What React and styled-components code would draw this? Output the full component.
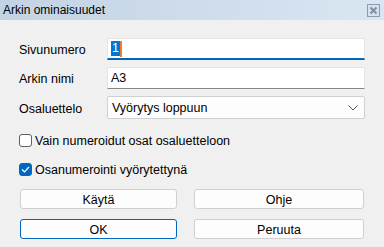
import React from 'react';
import styled, { createGlobalStyle } from 'styled-components';

const Global = createGlobalStyle`
    html, body { margin:0; padding:0; background:#f0f0f0; }
    body { font-family: "Liberation Sans", Arial, sans-serif; font-size:12.5px; color:#000; }
`

const Window = styled.div`
    width:384px;
    height:247px;
    background:#f0f0f0;
    display:flex;
    flex-direction:column;
    overflow:hidden;
`

const TitleBar = styled.div`
    height:20px;
    flex:none;
    display:flex;
    align-items:center;
    justify-content:space-between;
    padding:0 4px 0 3px;
    background:linear-gradient(to right, #c3d3e4, #d9e6f2);
    font-size:12px;
`

const CloseBox = styled.div`
    width:11px;
    height:11px;
    border:1px solid #8a9bb0;
    background:#d6e1ec;
    display:flex;
    align-items:center;
    justify-content:center;
    margin-top:1px;
`

const Body = styled.div`
    padding:18px 19px 0 19px;
    display:flex;
    flex-direction:column;
`

const Form = styled.div`
    display:grid;
    grid-template-columns:88px 1fr;
    row-gap:7px;
    align-items:center;
`

const Label = styled.label`
    padding-top:2px;
`

const Field = styled.div`
    height:22px;
    box-sizing:border-box;
    background:#fff;
    border:1px solid #e5e5e5;
    border-bottom:${p => p.$focus ? '2px solid #0067c0' : '1px solid #868686'};
    display:flex;
    align-items:center;
    padding:0 3px;
`

const Selected = styled.span`
    background:#0078d7;
    color:#fff;
    padding:0 1px;
    line-height:15px;
`

const Caret = styled.span`
    width:2px;
    height:16px;
    background:#f07d22;
`

const Select = styled.div`
    height:23px;
    box-sizing:border-box;
    background:#fdfdfd;
    border:1px solid #d0d0d0;
    border-radius:2px;
    display:flex;
    align-items:center;
    justify-content:space-between;
    padding:0 6px 0 4px;
`

const Checks = styled.div`
    display:flex;
    flex-direction:column;
    gap:16px;
    margin-top:15px;
`

const CheckRow = styled.div`
    display:flex;
    align-items:center;
    gap:3px;
    height:13px;
`

const Box = styled.span`
    width:13px;
    height:13px;
    box-sizing:border-box;
    border-radius:3px;
    border:1px solid ${p => p.$checked ? '#0067c0' : '#5f5f5f'};
    background:${p => p.$checked ? '#0067c0' : '#fff'};
    display:flex;
    align-items:center;
    justify-content:center;
`

const Buttons = styled.div`
    display:grid;
    grid-template-columns:157px 170px;
    column-gap:17px;
    row-gap:10px;
    margin-top:13px;
    padding-left:1px;
`

const Button = styled.button`
    height:20px;
    box-sizing:border-box;
    background:#fdfdfd;
    border:1px solid ${p => p.$primary ? '#0067c0' : '#d0d0d0'};
    border-radius:3px;
    font-family:inherit;
    font-size:12.5px;
    color:#000;
    padding:1px 0 0;
`

export default function App() {
    return (
        <Window>
            <Global />
            <TitleBar>
                <span>Arkin ominaisuudet</span>
                <CloseBox>
                    <svg width="9" height="9" viewBox="0 0 9 9">
                        <path d="M1.5 1.5 L7.5 7.5 M7.5 1.5 L1.5 7.5" stroke="#7d8ea3" strokeWidth="2" />
                    </svg>
                </CloseBox>
            </TitleBar>
            <Body>
                <Form>
                    <Label>Sivunumero</Label>
                    <Field $focus><Selected>1</Selected><Caret /></Field>
                    <Label>Arkin nimi</Label>
                    <Field>A3</Field>
                    <Label>Osaluettelo</Label>
                    <Select>
                        <span>Vyörytys loppuun</span>
                        <svg width="10" height="6" viewBox="0 0 10 6">
                            <path d="M0.5 0.5 L5 5 L9.5 0.5" fill="none" stroke="#555" strokeWidth="1" />
                        </svg>
                    </Select>
                </Form>
                <Checks>
                    <CheckRow>
                        <Box />
                        <span>Vain numeroidut osat osaluetteloon</span>
                    </CheckRow>
                    <CheckRow>
                        <Box $checked>
                            <svg width="9" height="7" viewBox="0 0 9 7">
                                <path d="M1 3.5 L3.5 6 L8 1" fill="none" stroke="#fff" strokeWidth="1.2" />
                            </svg>
                        </Box>
                        <span>Osanumerointi vyörytettynä</span>
                    </CheckRow>
                </Checks>
                <Buttons>
                    <Button>Käytä</Button>
                    <Button>Ohje</Button>
                    <Button $primary>OK</Button>
                    <Button>Peruuta</Button>
                </Buttons>
            </Body>
        </Window>
    )
}
